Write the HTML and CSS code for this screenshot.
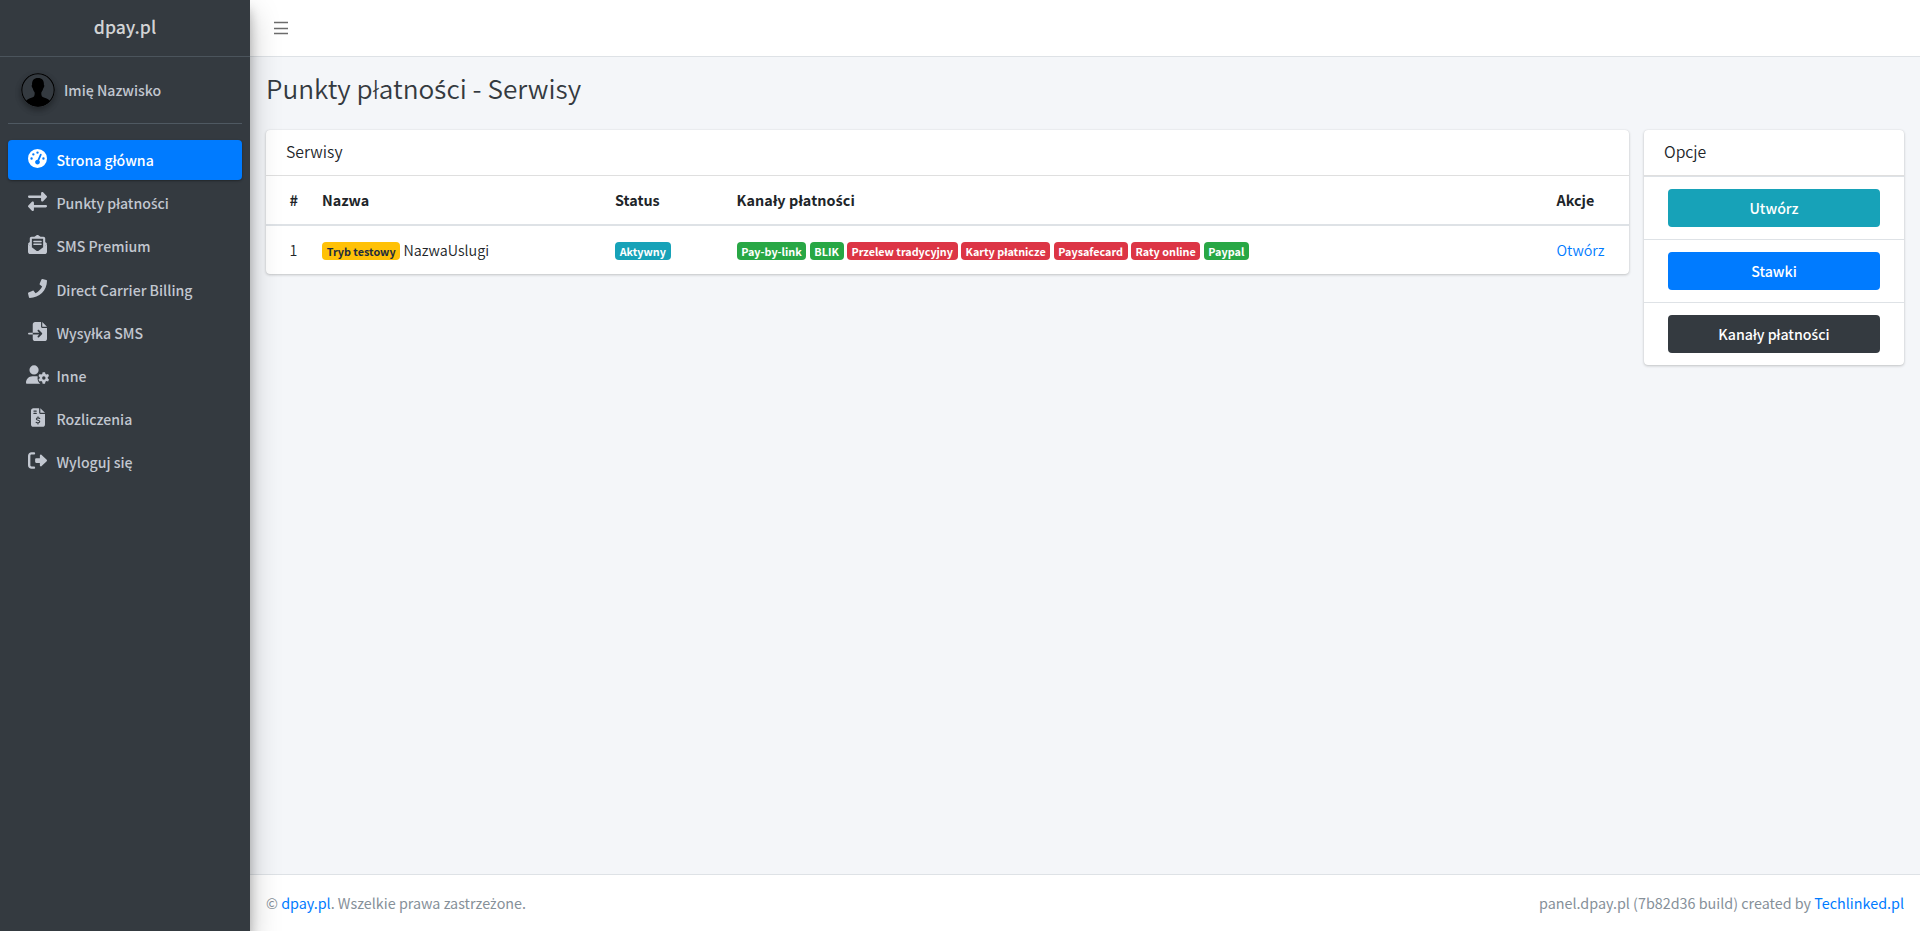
FILE: index.html
```html
<!DOCTYPE html>
<html lang="pl">
<head>
<meta charset="utf-8">
<title>dpay.pl</title>
<link rel="stylesheet" href="styles.css">
</head>
<body>
<div class="wrapper">
  <aside class="sidebar">
    <a class="brand">dpay.pl</a>
    <div class="sidebar-inner">
      <div class="user-panel">
        <svg class="avatar" viewBox="0 0 34 34"><circle cx="17" cy="17" r="16.2" fill="none" stroke="#000" stroke-width="1.1"/><path d="M17 5c4.200 0 6.200 2.600 5.900 6.800.7.300.5 2.600-.5 3.300-.4 2-1.300 3.300-2 4.200-.3 2 .1 3.900 1.200 4.700 2.500 1.300 5.800 1.700 7.300 4C26 31.500 22 33.500 17 33.500S8 31.500 5.100 28c1.500-2.300 4.800-2.700 7.300-4 1.100-.8 1.500-2.700 1.200-4.700-.7-.9-1.600-2.200-2-4.200-1-.7-1.200-3-.5-3.300C10.800 7.600 12.800 5 17 5z"/></svg>
        <a class="user-name">Imię Nazwisko</a>
      </div>
      <nav class="nav">
        <a class="nav-link active"><span class="nav-icon"><svg viewBox="0 0 512 512"><path fill-rule="evenodd" d="M256 0a256 256 0 1 1 0 512 256 256 0 1 1 0-512zm32 96a32 32 0 1 0-64 0 32 32 0 1 0 64 0zM256 416c35.300 0 64-28.700 64-64 0-17.400-6.900-33.100-18.100-44.600L366 161.700c5.300-12.100-.2-26.300-12.300-31.600s-26.300.2-31.600 12.300L257.900 288H256c-35.300 0-64 28.700-64 64s28.700 64 64 64zM176 144a32 32 0 1 0-64 0 32 32 0 1 0 64 0zM96 288a32 32 0 1 0 0-64 32 32 0 1 0 0 64zm352-32a32 32 0 1 0-64 0 32 32 0 1 0 64 0z"/></svg></span><span>Strona główna</span></a>
        <a class="nav-link"><span class="nav-icon"><svg viewBox="0 0 512 512"><path d="M32 96h320V32c0-12.900 7.800-24.600 19.800-29.600s25.700-2.200 34.900 6.900l96 96c12.500 12.500 12.500 32.800 0 45.300l-96 96c-9.200 9.200-22.900 11.900-34.900 6.900S352 236.900 352 224v-64H32c-17.700 0-32-14.300-32-32s14.300-32 32-32zm448 256c17.700 0 32 14.300 32 32s-14.300 32-32 32H160v64c0 12.900-7.800 24.600-19.800 29.600s-25.700 2.200-34.900-6.900l-96-96c-12.500-12.500-12.500-32.800 0-45.300l96-96c9.200-9.200 22.900-11.900 34.900-6.900S160 275.100 160 288v64h320z"/></svg></span><span>Punkty płatno<span class="accent">ś</span>ci</span></a>
        <a class="nav-link"><span class="nav-icon"><svg viewBox="0 0 512 512"><path fill-rule="evenodd" d="M0 448V254l23 18 194.600 145a64.500 64.500 0 0 0 76.800 0L489 272l23-18v194c0 35.300-28.700 64-64 64H64c-35.300 0-64-28.700-64-64zM48 186l-27.200 20.200C7.700 215.800 0 231.100 0 247.300l48 36V186zm416 0l27.200 20.200c13.100 9.600 20.800 24.900 20.800 41.100l-48 36V186zM96 48h76.600l49.900-37C232.200 3.900 243.900 0 256 0s23.800 3.900 33.500 11l49.900 37H416c26.500 0 48 21.500 48 48v195l-56 42V104H104v229l-56-42V96c0-26.500 21.500-48 48-48zm64 104h192a20 20 0 0 1 0 40H160a20 20 0 0 1 0-40zm0 76h192a20 20 0 0 1 0 40H160a20 20 0 0 1 0-40z"/></svg></span><span>SMS Premium</span></a>
        <a class="nav-link"><span class="nav-icon"><svg viewBox="0 0 512 512"><path d="M493.400 24.600l-104-24c-11.300-2.600-22.900 3.300-27.500 13.900l-48 112c-4.200 9.800-1.400 21.300 6.900 28l60.600 49.600c-36 76.700-98.900 140.500-177.200 177.200l-49.600-60.600c-6.800-8.300-18.200-11.100-28-6.900l-112 48C3.900 366.500-2 378.100.6 389.400l24 104C27.100 504.200 36.700 512 48 512c256.100 0 464-207.500 464-464 0-11.200-7.700-20.900-18.600-23.400z"/></svg></span><span>Direct Carrier Billing</span></a>
        <a class="nav-link"><span class="nav-icon"><svg viewBox="0 0 512 512"><path d="M128 64c0-35.300 28.700-64 64-64h160v128c0 17.700 14.300 32 32 32h128v288c0 35.300-28.700 64-64 64H192c-35.300 0-64-28.700-64-64V336h174.100l-39 39c-9.400 9.400-9.400 24.600 0 33.900s24.600 9.400 33.900 0l80-80c9.400-9.400 9.400-24.600 0-33.900l-80-80c-9.400-9.400-24.600-9.400-33.900 0s-9.400 24.600 0 33.900l39 39H128V64zm0 224v48H24c-13.300 0-24-10.700-24-24s10.700-24 24-24h104zm384-160H384V0l128 128z"/></svg></span><span>Wysyłka SMS</span></a>
        <a class="nav-link"><span class="nav-icon"><svg class="wide" viewBox="0 0 640 512"><path d="M224 0a128 128 0 1 1 0 256 128 128 0 1 1 0-256zm-45.700 304h91.400c20.600 0 40.400 3.500 58.800 9.900-4 17.500-7 33-7 50.100 0 60 30 112 76 148H29.700C13.300 512 0 498.700 0 482.300 0 383.800 79.800 304 178.300 304z"/><path fill-rule="evenodd" d="M463 192h66l12 47 27 16 47-14 25 55-35 35v32l35 35-25 55-47-14-27 16-12 57h-66l-12-57-27-16-47 14-30-55 35-35v-32l-35-35 30-55 47 14 27-16zm33 112a48 48 0 1 0 0 96 48 48 0 1 0 0-96z"/></svg></span><span>Inne</span></a>
        <a class="nav-link"><span class="nav-icon"><svg class="narrow" viewBox="0 0 384 512"><path fill-rule="evenodd" d="M64 0h160v128c0 17.700 14.300 32 32 32h128v288c0 35.300-28.700 64-64 64H64c-35.300 0-64-28.700-64-64V64C0 28.700 28.700 0 64 0zm192 0l128 128H256V0zM64 80a16 16 0 0 0 16 16h64a16 16 0 0 0 0-32H80a16 16 0 0 0-16 16zm0 64a16 16 0 0 0 16 16h64a16 16 0 0 0 0-32H80a16 16 0 0 0-16 16z"/><path d="M240 282c-16-11-31-16-48-16-27 0-45 12-45 32 0 46 93 24 93 70 0 23-19 35-48 35-20 0-38-6-52-17M192 240v26m0 137v28" fill="none" stroke="#343a40" stroke-width="30" stroke-linecap="round"/></svg></span><span>Rozliczenia</span></a>
        <a class="nav-link"><span class="nav-icon"><svg viewBox="0 0 512 512"><path d="M160 96c17.700 0 32-14.300 32-32s-14.300-32-32-32H96C43 32 0 75 0 128v256c0 53 43 96 96 96h64c17.700 0 32-14.300 32-32s-14.300-32-32-32H96c-17.700 0-32-14.300-32-32V128c0-17.700 14.300-32 32-32h64zm344.500 177.400c4.800-4.500 7.500-10.800 7.500-17.400s-2.700-12.900-7.500-17.400l-144-136c-7-6.600-17.200-8.400-26-4.600S320 110.400 320 120v72h-96c-17.700 0-32 14.300-32 32v64c0 17.700 14.300 32 32 32h96v72c0 9.600 5.700 18.200 14.500 22s19 2 26-4.600l144-136z"/></svg></span><span>Wyloguj się</span></a>
      </nav>
    </div>
  </aside>
  <div class="main">
    <header class="topbar"><svg class="menu-icon" viewBox="0 0 14 16"><path d="M0 2.500h14M0 8.500h14M0 13.500h14"/></svg></header>
    <main class="content">
      <h1>Punkty płatno<span class="accent">ś</span>ci - Serwisy</h1>
      <div class="columns">
        <section class="card services">
          <h3 class="card-title">Serwisy</h3>
          <table class="table">
            <colgroup><col class="c-id"><col class="c-name"><col class="c-status"><col class="c-channels"><col class="c-actions"></colgroup>
            <thead><tr><th>#</th><th>Nazwa</th><th>Status</th><th class="wide-head">Kanały płatno<span class="accent">ś</span>ci</th><th>Akcje</th></tr></thead>
            <tbody><tr>
              <td>1</td>
              <td><span class="badge warning">Tryb testowy</span> NazwaUslugi</td>
              <td><span class="badge info">Aktywny</span></td>
              <td><span class="badge success">Pay-by-link</span> <span class="badge success">BLIK</span> <span class="badge danger">Przelew tradycyjny</span> <span class="badge danger">Karty płatnicze</span> <span class="badge danger">Paysafecard</span> <span class="badge danger">Raty online</span> <span class="badge success">Paypal</span></td>
              <td><a class="link">Otwórz</a></td>
            </tr></tbody>
          </table>
        </section>
        <section class="card options">
          <h3 class="card-title">Opcje</h3>
          <div class="option"><a class="btn info">Utwórz</a></div>
          <div class="option"><a class="btn primary">Stawki</a></div>
          <div class="option"><a class="btn dark">Kanały płatno<span class="accent">ś</span>ci</a></div>
        </section>
      </div>
    </main>
    <footer class="footer">
      <span>© <a class="link">dpay.pl</a>. Wszelkie prawa zastrze<span class="accent">ż</span>one.</span>
      <span>panel.dpay.pl (7b82d36 build) created by <a class="link">Techlinked.pl</a></span>
    </footer>
  </div>
</div>
</body>
</html>
```
FILE: styles.css
```css
* { box-sizing: border-box; }
body {
  margin: 0;
  font-family: "Source Sans Pro", "Noto Sans CJK SC", "Noto Sans", sans-serif;
  font-size: 14.35px;
  line-height: 24px;
  color: #212529;
  background: #f4f6f9;
}
.accent { font-family: "Source Sans Pro", "Noto Sans", sans-serif; font-size: .97em; line-height: 1; }
.wrapper { display: flex; height: 931px; overflow: hidden; }
.sidebar {
  position: relative;
  z-index: 2;
  width: 250px;
  flex: none;
  background: #343a40;
  color: #c2c7d0;
  font-weight: 500;
  font-size: 14.1px;
  box-shadow: 0 14px 28px rgba(0,0,0,.25), 0 10px 10px rgba(0,0,0,.22);
}
.brand {
  display: block;
  height: 57px;
  padding: 12px 8px;
  border-bottom: 1px solid #4b545c;
  font-size: 17.6px;
  line-height: 30px;
  text-align: center;
  color: rgba(255,255,255,.8);
}
.sidebar-inner { padding: 0 8px; }
.user-panel {
  display: flex;
  align-items: center;
  height: 67px;
  padding-left: 12.500px;
  border-bottom: 1px solid #4f5962;
}
.avatar {
  width: 34px;
  height: 34px;
  border-radius: 50%;
  box-shadow: 0 3px 6px rgba(0,0,0,.16), 0 3px 6px rgba(0,0,0,.23);
}
.user-name { padding-left: 9.500px; }
.nav { display: flex; flex-direction: column; gap: 3.2px; margin-top: 16px; }
.nav-link { display: flex; height: 40px; padding: 8px 16px; border-radius: 4px; }
.nav-link.active {
  background: #007bff;
  color: #fff;
  box-shadow: 0 1px 3px rgba(0,0,0,.12), 0 1px 2px rgba(0,0,0,.24);
}
.nav-icon { display: flex; justify-content: center; width: 27.2px; margin-right: 5.3px; }
.nav-icon svg { flex: none; width: 19px; height: 19px; margin-top: 1px; fill: currentColor; }
.nav-icon svg.wide { width: 23px; }
.nav-icon svg.narrow { width: 14px; }
.main { display: flex; flex: 1; flex-direction: column; min-width: 0; }
.topbar {
  display: flex;
  align-items: center;
  height: 57px;
  padding-left: 24px;
  background: #fff;
  border-bottom: 1px solid #dee2e6;
}
.menu-icon { width: 14px; height: 16px; stroke: #6c6c6c; stroke-width: 1.6; }
.content { flex: 1; padding: 14px 16px 0; }
h1 { margin: 0; font-size: 26.2px; line-height: 34px; font-weight: 350; color: #343a40; }
h1 .accent { font-weight: 400; }
.columns { display: flex; gap: 15px; margin-top: 25px; align-items: flex-start; }
.card {
  background: #fff;
  border-radius: 4px;
  box-shadow: 0 0 1px rgba(0,0,0,.125), 0 1px 3px rgba(0,0,0,.2);
}
.services { width: 1363px; }
.options { width: 260px; }
.card-title {
  height: 46px;
  margin: 0;
  padding: 11px 20px;
  border-bottom: 1px solid rgba(0,0,0,.125);
  font-size: 15.8px;
  line-height: 21px;
  font-weight: 350;
}
.table { width: 100%; table-layout: fixed; border-collapse: separate; border-spacing: 0; }
.c-id { width: 44px; }
.c-name { width: 293px; }
.c-status { width: 121.500px; }
.c-actions { width: 84.500px; }
.table th, .table td { padding: 12px 0 12px 12px; height: 48px; text-align: left; }
.table td { font-weight: 350; }
.table th { height: 50px; font-weight: 700; border-bottom: 2px solid #dee2e6; }
.table .wide-head { letter-spacing: .1px; }
.table th:first-child, .table td:first-child { padding-left: 23.500px; }
.badge {
  display: inline-block;
  padding: 3px 4.7px;
  border-radius: 4px;
  font-size: 10.8px;
  line-height: 12px;
  font-weight: 700;
  color: #fff;
  vertical-align: baseline;
}
.info { background: #17a2b8; }
.success { background: #28a745; }
.danger { background: #dc3545; }
.primary { background: #007bff; }
.dark { background: #343a40; }
.badge.warning { background: #ffc107; color: #1f2d3d; }
.link { color: #007bff; }
.option { padding: 12px 24px; border-top: 1px solid #dee2e6; }
.btn { display: block; height: 38px; padding: 7px; border-radius: 4px; text-align: center; color: #fff; font-weight: 500; font-size: 14.2px; }
.footer {
  display: flex;
  justify-content: space-between;
  height: 57px;
  padding: 16px;
  background: #fff;
  border-top: 1px solid #dee2e6;
  color: #869099;
}
```
